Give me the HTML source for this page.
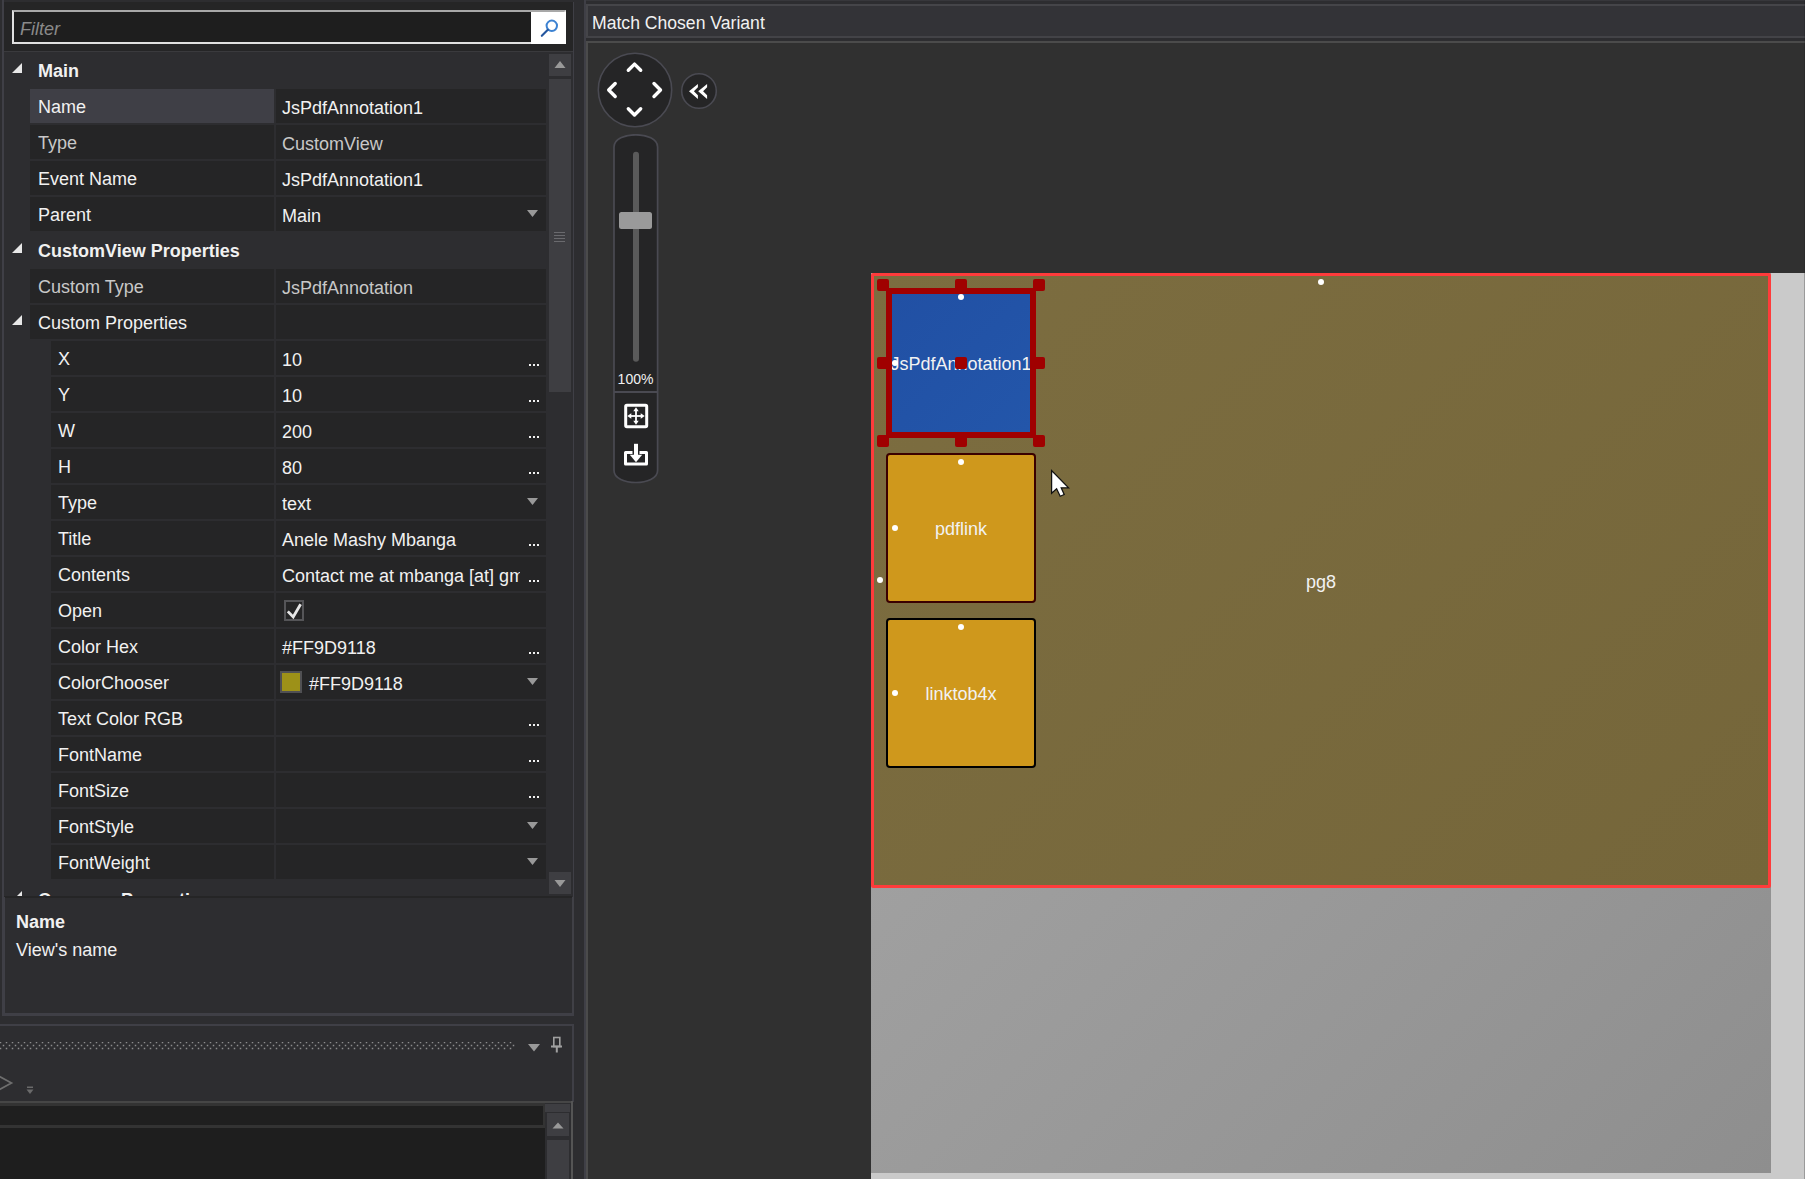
<!DOCTYPE html>
<html><head><meta charset="utf-8">
<style>
html,body{margin:0;padding:0;}
body{width:1805px;height:1179px;overflow:hidden;position:relative;background:#2d2d30;font-family:"Liberation Sans",sans-serif;color:#f1f1f1;}
div{position:absolute;box-sizing:border-box;}
svg{position:absolute;}
.t{white-space:nowrap;font-size:18px;line-height:20px;}
</style></head><body>

<div style="left:2px;top:0px;width:2px;height:897px;background:#3f3f46;"></div>
<div style="left:573px;top:2px;width:1px;height:895px;background:#3f3f46;"></div>
<div style="left:584px;top:0px;width:2px;height:1179px;background:#3f3f46;"></div>
<div style="left:4px;top:2px;width:569px;height:49px;background:#252526;"></div>
<div style="left:4px;top:51px;width:569px;height:1px;background:#3a3a3d;"></div>
<div style="left:12px;top:10px;width:554px;height:34px;background:#1e1e1e;border:2px solid #e0e0e0;border-top-color:#a8a8a8;"></div>
<div class="t" style="left:20px;top:19px;font-style:italic;color:#8a8a8a;">Filter</div>
<div style="left:531px;top:12px;width:35px;height:32px;background:#ffffff;"><svg width="35" height="32" style="left:0;top:0"><circle cx="20.8" cy="13.8" r="5.2" fill="none" stroke="#3c82d2" stroke-width="2"/><line x1="16.8" y1="17.8" x2="10.8" y2="23.8" stroke="#24569e" stroke-width="2.1" stroke-linecap="round"/></svg></div>
<div style="left:4px;top:52px;width:569px;height:844px;overflow:hidden;background:#2d2d30;"><div style="left:-4px;top:-52px;width:573px;height:1000px;">
<svg style="left:12px;top:63px" width="11" height="11"><polygon points="10,0 10,10 0,10" fill="#e8e8e8"/></svg>
<div class="t" style="left:38px;top:61px;font-weight:bold;">Main</div>
<div style="left:30px;top:89px;width:244px;height:34px;background:#3f3f46;"></div>
<div style="left:276px;top:89px;width:270px;height:34px;background:#252526;"></div>
<div class="t" style="left:38px;top:97px;color:#f1f1f1;">Name</div>
<div class="t" style="left:282px;top:98px;color:#f1f1f1;">JsPdfAnnotation1</div>
<div style="left:30px;top:125px;width:244px;height:34px;background:#252526;"></div>
<div style="left:276px;top:125px;width:270px;height:34px;background:#252526;"></div>
<div class="t" style="left:38px;top:133px;color:#c8c8c8;">Type</div>
<div class="t" style="left:282px;top:134px;color:#c8c8c8;">CustomView</div>
<div style="left:30px;top:161px;width:244px;height:34px;background:#252526;"></div>
<div style="left:276px;top:161px;width:270px;height:34px;background:#252526;"></div>
<div class="t" style="left:38px;top:169px;color:#f1f1f1;">Event Name</div>
<div class="t" style="left:282px;top:170px;color:#f1f1f1;">JsPdfAnnotation1</div>
<div style="left:30px;top:197px;width:244px;height:34px;background:#252526;"></div>
<div style="left:276px;top:197px;width:270px;height:34px;background:#252526;"></div>
<div class="t" style="left:38px;top:205px;color:#f1f1f1;">Parent</div>
<div class="t" style="left:282px;top:206px;color:#f1f1f1;">Main</div>
<svg style="left:527px;top:210px" width="12" height="8"><polygon points="0,0 11,0 5.5,7" fill="#999999"/></svg>
<svg style="left:12px;top:243px" width="11" height="11"><polygon points="10,0 10,10 0,10" fill="#e8e8e8"/></svg>
<div class="t" style="left:38px;top:241px;font-weight:bold;">CustomView Properties</div>
<div style="left:30px;top:269px;width:244px;height:34px;background:#252526;"></div>
<div style="left:276px;top:269px;width:270px;height:34px;background:#252526;"></div>
<div class="t" style="left:38px;top:277px;color:#c8c8c8;">Custom Type</div>
<div class="t" style="left:282px;top:278px;color:#c8c8c8;">JsPdfAnnotation</div>
<div style="left:30px;top:305px;width:244px;height:34px;background:#252526;"></div>
<div style="left:276px;top:305px;width:270px;height:34px;background:#252526;"></div>
<svg style="left:12px;top:315px" width="11" height="11"><polygon points="10,0 10,10 0,10" fill="#e8e8e8"/></svg>
<div class="t" style="left:38px;top:313px;">Custom Properties</div>
<div style="left:51px;top:341px;width:223px;height:34px;background:#252526;"></div>
<div style="left:276px;top:341px;width:270px;height:34px;background:#252526;"></div>
<div class="t" style="left:58px;top:349px;color:#f1f1f1;">X</div>
<div class="t" style="left:282px;top:350px;color:#f1f1f1;">10</div>
<div style="left:529px;top:364px;width:2px;height:2px;background:#f1f1f1;"></div>
<div style="left:533px;top:364px;width:2px;height:2px;background:#f1f1f1;"></div>
<div style="left:537px;top:364px;width:2px;height:2px;background:#f1f1f1;"></div>
<div style="left:51px;top:377px;width:223px;height:34px;background:#252526;"></div>
<div style="left:276px;top:377px;width:270px;height:34px;background:#252526;"></div>
<div class="t" style="left:58px;top:385px;color:#f1f1f1;">Y</div>
<div class="t" style="left:282px;top:386px;color:#f1f1f1;">10</div>
<div style="left:529px;top:400px;width:2px;height:2px;background:#f1f1f1;"></div>
<div style="left:533px;top:400px;width:2px;height:2px;background:#f1f1f1;"></div>
<div style="left:537px;top:400px;width:2px;height:2px;background:#f1f1f1;"></div>
<div style="left:51px;top:413px;width:223px;height:34px;background:#252526;"></div>
<div style="left:276px;top:413px;width:270px;height:34px;background:#252526;"></div>
<div class="t" style="left:58px;top:421px;color:#f1f1f1;">W</div>
<div class="t" style="left:282px;top:422px;color:#f1f1f1;">200</div>
<div style="left:529px;top:436px;width:2px;height:2px;background:#f1f1f1;"></div>
<div style="left:533px;top:436px;width:2px;height:2px;background:#f1f1f1;"></div>
<div style="left:537px;top:436px;width:2px;height:2px;background:#f1f1f1;"></div>
<div style="left:51px;top:449px;width:223px;height:34px;background:#252526;"></div>
<div style="left:276px;top:449px;width:270px;height:34px;background:#252526;"></div>
<div class="t" style="left:58px;top:457px;color:#f1f1f1;">H</div>
<div class="t" style="left:282px;top:458px;color:#f1f1f1;">80</div>
<div style="left:529px;top:472px;width:2px;height:2px;background:#f1f1f1;"></div>
<div style="left:533px;top:472px;width:2px;height:2px;background:#f1f1f1;"></div>
<div style="left:537px;top:472px;width:2px;height:2px;background:#f1f1f1;"></div>
<div style="left:51px;top:485px;width:223px;height:34px;background:#252526;"></div>
<div style="left:276px;top:485px;width:270px;height:34px;background:#252526;"></div>
<div class="t" style="left:58px;top:493px;color:#f1f1f1;">Type</div>
<div class="t" style="left:282px;top:494px;color:#f1f1f1;">text</div>
<svg style="left:527px;top:498px" width="12" height="8"><polygon points="0,0 11,0 5.5,7" fill="#999999"/></svg>
<div style="left:51px;top:521px;width:223px;height:34px;background:#252526;"></div>
<div style="left:276px;top:521px;width:270px;height:34px;background:#252526;"></div>
<div class="t" style="left:58px;top:529px;color:#f1f1f1;">Title</div>
<div class="t" style="left:282px;top:530px;color:#f1f1f1;">Anele Mashy Mbanga</div>
<div style="left:529px;top:544px;width:2px;height:2px;background:#f1f1f1;"></div>
<div style="left:533px;top:544px;width:2px;height:2px;background:#f1f1f1;"></div>
<div style="left:537px;top:544px;width:2px;height:2px;background:#f1f1f1;"></div>
<div style="left:51px;top:557px;width:223px;height:34px;background:#252526;"></div>
<div style="left:276px;top:557px;width:270px;height:34px;background:#252526;"></div>
<div class="t" style="left:58px;top:565px;color:#f1f1f1;">Contents</div>
<div class="t" style="left:282px;top:566px;width:238px;overflow:hidden;color:#f1f1f1;">Contact me at mbanga [at] gmail.com</div>
<div style="left:529px;top:580px;width:2px;height:2px;background:#f1f1f1;"></div>
<div style="left:533px;top:580px;width:2px;height:2px;background:#f1f1f1;"></div>
<div style="left:537px;top:580px;width:2px;height:2px;background:#f1f1f1;"></div>
<div style="left:51px;top:593px;width:223px;height:34px;background:#252526;"></div>
<div style="left:276px;top:593px;width:270px;height:34px;background:#252526;"></div>
<div class="t" style="left:58px;top:601px;color:#f1f1f1;">Open</div>
<div style="left:284px;top:600px;width:20px;height:21px;border:2px solid #555558;background:#252526;"><svg width="22" height="22" style="left:-2px;top:-2px"><polyline points="3.8,11.4 9.2,17 16.6,4.2" fill="none" stroke="#e6e6e6" stroke-width="2.8"/></svg></div>
<div style="left:51px;top:629px;width:223px;height:34px;background:#252526;"></div>
<div style="left:276px;top:629px;width:270px;height:34px;background:#252526;"></div>
<div class="t" style="left:58px;top:637px;color:#f1f1f1;">Color Hex</div>
<div class="t" style="left:282px;top:638px;color:#f1f1f1;">#FF9D9118</div>
<div style="left:529px;top:652px;width:2px;height:2px;background:#f1f1f1;"></div>
<div style="left:533px;top:652px;width:2px;height:2px;background:#f1f1f1;"></div>
<div style="left:537px;top:652px;width:2px;height:2px;background:#f1f1f1;"></div>
<div style="left:51px;top:665px;width:223px;height:34px;background:#252526;"></div>
<div style="left:276px;top:665px;width:270px;height:34px;background:#252526;"></div>
<div class="t" style="left:58px;top:673px;color:#f1f1f1;">ColorChooser</div>
<div style="left:280px;top:671px;width:22px;height:22px;border:2px solid #505053;background:#9d9118;"></div>
<div class="t" style="left:309px;top:674px;color:#f1f1f1;">#FF9D9118</div>
<svg style="left:527px;top:678px" width="12" height="8"><polygon points="0,0 11,0 5.5,7" fill="#999999"/></svg>
<div style="left:51px;top:701px;width:223px;height:34px;background:#252526;"></div>
<div style="left:276px;top:701px;width:270px;height:34px;background:#252526;"></div>
<div class="t" style="left:58px;top:709px;color:#f1f1f1;">Text Color RGB</div>
<div class="t" style="left:282px;top:710px;color:#f1f1f1;"></div>
<div style="left:529px;top:724px;width:2px;height:2px;background:#f1f1f1;"></div>
<div style="left:533px;top:724px;width:2px;height:2px;background:#f1f1f1;"></div>
<div style="left:537px;top:724px;width:2px;height:2px;background:#f1f1f1;"></div>
<div style="left:51px;top:737px;width:223px;height:34px;background:#252526;"></div>
<div style="left:276px;top:737px;width:270px;height:34px;background:#252526;"></div>
<div class="t" style="left:58px;top:745px;color:#f1f1f1;">FontName</div>
<div class="t" style="left:282px;top:746px;color:#f1f1f1;"></div>
<div style="left:529px;top:760px;width:2px;height:2px;background:#f1f1f1;"></div>
<div style="left:533px;top:760px;width:2px;height:2px;background:#f1f1f1;"></div>
<div style="left:537px;top:760px;width:2px;height:2px;background:#f1f1f1;"></div>
<div style="left:51px;top:773px;width:223px;height:34px;background:#252526;"></div>
<div style="left:276px;top:773px;width:270px;height:34px;background:#252526;"></div>
<div class="t" style="left:58px;top:781px;color:#f1f1f1;">FontSize</div>
<div class="t" style="left:282px;top:782px;color:#f1f1f1;"></div>
<div style="left:529px;top:796px;width:2px;height:2px;background:#f1f1f1;"></div>
<div style="left:533px;top:796px;width:2px;height:2px;background:#f1f1f1;"></div>
<div style="left:537px;top:796px;width:2px;height:2px;background:#f1f1f1;"></div>
<div style="left:51px;top:809px;width:223px;height:34px;background:#252526;"></div>
<div style="left:276px;top:809px;width:270px;height:34px;background:#252526;"></div>
<div class="t" style="left:58px;top:817px;color:#f1f1f1;">FontStyle</div>
<div class="t" style="left:282px;top:818px;color:#f1f1f1;"></div>
<svg style="left:527px;top:822px" width="12" height="8"><polygon points="0,0 11,0 5.5,7" fill="#999999"/></svg>
<div style="left:51px;top:845px;width:223px;height:34px;background:#252526;"></div>
<div style="left:276px;top:845px;width:270px;height:34px;background:#252526;"></div>
<div class="t" style="left:58px;top:853px;color:#f1f1f1;">FontWeight</div>
<div class="t" style="left:282px;top:854px;color:#f1f1f1;"></div>
<svg style="left:527px;top:858px" width="12" height="8"><polygon points="0,0 11,0 5.5,7" fill="#999999"/></svg>
<svg style="left:12px;top:891px" width="11" height="11"><polygon points="10,0 10,10 0,10" fill="#e8e8e8"/></svg>
<div class="t" style="left:38px;top:890px;font-weight:bold;">Common Properties</div>
</div></div>
<div style="left:549px;top:54px;width:22px;height:22px;background:#3e3e42;"><svg width="22" height="22" style="left:0;top:0"><polygon points="5.5,14 16.5,14 11,7" fill="#999999"/></svg></div>
<div style="left:549px;top:79px;width:22px;height:313px;background:#3e3e42;"></div>
<div style="left:554px;top:232px;width:11px;height:1px;background:#6a6a6e;"></div>
<div style="left:554px;top:235px;width:11px;height:1px;background:#6a6a6e;"></div>
<div style="left:554px;top:238px;width:11px;height:1px;background:#6a6a6e;"></div>
<div style="left:554px;top:241px;width:11px;height:1px;background:#6a6a6e;"></div>
<div style="left:549px;top:872px;width:22px;height:22px;background:#3e3e42;"><svg width="22" height="22" style="left:0;top:0"><polygon points="5.5,8 16.5,8 11,15" fill="#999999"/></svg></div>
<div style="left:4px;top:896px;width:568px;height:2px;background:#252526;"></div>
<div style="left:2px;top:897px;width:3px;height:119px;background:#3f3f46;"></div>
<div style="left:572px;top:897px;width:2px;height:119px;background:#404046;"></div>
<div class="t" style="left:16px;top:912px;font-weight:bold;">Name</div>
<div class="t" style="left:16px;top:940px;">View's name</div>
<div style="left:2px;top:1013px;width:572px;height:3px;background:#3f3f46;"></div>
<div style="left:0px;top:1024px;width:574px;height:2px;background:#3f3f46;"></div>
<div style="left:572px;top:1024px;width:2px;height:78px;background:#3f3f46;"></div>
<svg style="left:0;top:1042px" width="520" height="8"><g fill="#8c8c8c"><rect x="-0.25" y="-0.25" width="1.5" height="1.5"/><rect x="5.75" y="-0.25" width="1.5" height="1.5"/><rect x="11.75" y="-0.25" width="1.5" height="1.5"/><rect x="17.75" y="-0.25" width="1.5" height="1.5"/><rect x="23.75" y="-0.25" width="1.5" height="1.5"/><rect x="29.75" y="-0.25" width="1.5" height="1.5"/><rect x="35.75" y="-0.25" width="1.5" height="1.5"/><rect x="41.75" y="-0.25" width="1.5" height="1.5"/><rect x="47.75" y="-0.25" width="1.5" height="1.5"/><rect x="53.75" y="-0.25" width="1.5" height="1.5"/><rect x="59.75" y="-0.25" width="1.5" height="1.5"/><rect x="65.75" y="-0.25" width="1.5" height="1.5"/><rect x="71.75" y="-0.25" width="1.5" height="1.5"/><rect x="77.75" y="-0.25" width="1.5" height="1.5"/><rect x="83.75" y="-0.25" width="1.5" height="1.5"/><rect x="89.75" y="-0.25" width="1.5" height="1.5"/><rect x="95.75" y="-0.25" width="1.5" height="1.5"/><rect x="101.75" y="-0.25" width="1.5" height="1.5"/><rect x="107.75" y="-0.25" width="1.5" height="1.5"/><rect x="113.75" y="-0.25" width="1.5" height="1.5"/><rect x="119.75" y="-0.25" width="1.5" height="1.5"/><rect x="125.75" y="-0.25" width="1.5" height="1.5"/><rect x="131.75" y="-0.25" width="1.5" height="1.5"/><rect x="137.75" y="-0.25" width="1.5" height="1.5"/><rect x="143.75" y="-0.25" width="1.5" height="1.5"/><rect x="149.75" y="-0.25" width="1.5" height="1.5"/><rect x="155.75" y="-0.25" width="1.5" height="1.5"/><rect x="161.75" y="-0.25" width="1.5" height="1.5"/><rect x="167.75" y="-0.25" width="1.5" height="1.5"/><rect x="173.75" y="-0.25" width="1.5" height="1.5"/><rect x="179.75" y="-0.25" width="1.5" height="1.5"/><rect x="185.75" y="-0.25" width="1.5" height="1.5"/><rect x="191.75" y="-0.25" width="1.5" height="1.5"/><rect x="197.75" y="-0.25" width="1.5" height="1.5"/><rect x="203.75" y="-0.25" width="1.5" height="1.5"/><rect x="209.75" y="-0.25" width="1.5" height="1.5"/><rect x="215.75" y="-0.25" width="1.5" height="1.5"/><rect x="221.75" y="-0.25" width="1.5" height="1.5"/><rect x="227.75" y="-0.25" width="1.5" height="1.5"/><rect x="233.75" y="-0.25" width="1.5" height="1.5"/><rect x="239.75" y="-0.25" width="1.5" height="1.5"/><rect x="245.75" y="-0.25" width="1.5" height="1.5"/><rect x="251.75" y="-0.25" width="1.5" height="1.5"/><rect x="257.75" y="-0.25" width="1.5" height="1.5"/><rect x="263.75" y="-0.25" width="1.5" height="1.5"/><rect x="269.75" y="-0.25" width="1.5" height="1.5"/><rect x="275.75" y="-0.25" width="1.5" height="1.5"/><rect x="281.75" y="-0.25" width="1.5" height="1.5"/><rect x="287.75" y="-0.25" width="1.5" height="1.5"/><rect x="293.75" y="-0.25" width="1.5" height="1.5"/><rect x="299.75" y="-0.25" width="1.5" height="1.5"/><rect x="305.75" y="-0.25" width="1.5" height="1.5"/><rect x="311.75" y="-0.25" width="1.5" height="1.5"/><rect x="317.75" y="-0.25" width="1.5" height="1.5"/><rect x="323.75" y="-0.25" width="1.5" height="1.5"/><rect x="329.75" y="-0.25" width="1.5" height="1.5"/><rect x="335.75" y="-0.25" width="1.5" height="1.5"/><rect x="341.75" y="-0.25" width="1.5" height="1.5"/><rect x="347.75" y="-0.25" width="1.5" height="1.5"/><rect x="353.75" y="-0.25" width="1.5" height="1.5"/><rect x="359.75" y="-0.25" width="1.5" height="1.5"/><rect x="365.75" y="-0.25" width="1.5" height="1.5"/><rect x="371.75" y="-0.25" width="1.5" height="1.5"/><rect x="377.75" y="-0.25" width="1.5" height="1.5"/><rect x="383.75" y="-0.25" width="1.5" height="1.5"/><rect x="389.75" y="-0.25" width="1.5" height="1.5"/><rect x="395.75" y="-0.25" width="1.5" height="1.5"/><rect x="401.75" y="-0.25" width="1.5" height="1.5"/><rect x="407.75" y="-0.25" width="1.5" height="1.5"/><rect x="413.75" y="-0.25" width="1.5" height="1.5"/><rect x="419.75" y="-0.25" width="1.5" height="1.5"/><rect x="425.75" y="-0.25" width="1.5" height="1.5"/><rect x="431.75" y="-0.25" width="1.5" height="1.5"/><rect x="437.75" y="-0.25" width="1.5" height="1.5"/><rect x="443.75" y="-0.25" width="1.5" height="1.5"/><rect x="449.75" y="-0.25" width="1.5" height="1.5"/><rect x="455.75" y="-0.25" width="1.5" height="1.5"/><rect x="461.75" y="-0.25" width="1.5" height="1.5"/><rect x="467.75" y="-0.25" width="1.5" height="1.5"/><rect x="473.75" y="-0.25" width="1.5" height="1.5"/><rect x="479.75" y="-0.25" width="1.5" height="1.5"/><rect x="485.75" y="-0.25" width="1.5" height="1.5"/><rect x="491.75" y="-0.25" width="1.5" height="1.5"/><rect x="497.75" y="-0.25" width="1.5" height="1.5"/><rect x="503.75" y="-0.25" width="1.5" height="1.5"/><rect x="509.75" y="-0.25" width="1.5" height="1.5"/><rect x="2.75" y="2.75" width="1.5" height="1.5"/><rect x="8.75" y="2.75" width="1.5" height="1.5"/><rect x="14.75" y="2.75" width="1.5" height="1.5"/><rect x="20.75" y="2.75" width="1.5" height="1.5"/><rect x="26.75" y="2.75" width="1.5" height="1.5"/><rect x="32.75" y="2.75" width="1.5" height="1.5"/><rect x="38.75" y="2.75" width="1.5" height="1.5"/><rect x="44.75" y="2.75" width="1.5" height="1.5"/><rect x="50.75" y="2.75" width="1.5" height="1.5"/><rect x="56.75" y="2.75" width="1.5" height="1.5"/><rect x="62.75" y="2.75" width="1.5" height="1.5"/><rect x="68.75" y="2.75" width="1.5" height="1.5"/><rect x="74.75" y="2.75" width="1.5" height="1.5"/><rect x="80.75" y="2.75" width="1.5" height="1.5"/><rect x="86.75" y="2.75" width="1.5" height="1.5"/><rect x="92.75" y="2.75" width="1.5" height="1.5"/><rect x="98.75" y="2.75" width="1.5" height="1.5"/><rect x="104.75" y="2.75" width="1.5" height="1.5"/><rect x="110.75" y="2.75" width="1.5" height="1.5"/><rect x="116.75" y="2.75" width="1.5" height="1.5"/><rect x="122.75" y="2.75" width="1.5" height="1.5"/><rect x="128.75" y="2.75" width="1.5" height="1.5"/><rect x="134.75" y="2.75" width="1.5" height="1.5"/><rect x="140.75" y="2.75" width="1.5" height="1.5"/><rect x="146.75" y="2.75" width="1.5" height="1.5"/><rect x="152.75" y="2.75" width="1.5" height="1.5"/><rect x="158.75" y="2.75" width="1.5" height="1.5"/><rect x="164.75" y="2.75" width="1.5" height="1.5"/><rect x="170.75" y="2.75" width="1.5" height="1.5"/><rect x="176.75" y="2.75" width="1.5" height="1.5"/><rect x="182.75" y="2.75" width="1.5" height="1.5"/><rect x="188.75" y="2.75" width="1.5" height="1.5"/><rect x="194.75" y="2.75" width="1.5" height="1.5"/><rect x="200.75" y="2.75" width="1.5" height="1.5"/><rect x="206.75" y="2.75" width="1.5" height="1.5"/><rect x="212.75" y="2.75" width="1.5" height="1.5"/><rect x="218.75" y="2.75" width="1.5" height="1.5"/><rect x="224.75" y="2.75" width="1.5" height="1.5"/><rect x="230.75" y="2.75" width="1.5" height="1.5"/><rect x="236.75" y="2.75" width="1.5" height="1.5"/><rect x="242.75" y="2.75" width="1.5" height="1.5"/><rect x="248.75" y="2.75" width="1.5" height="1.5"/><rect x="254.75" y="2.75" width="1.5" height="1.5"/><rect x="260.75" y="2.75" width="1.5" height="1.5"/><rect x="266.75" y="2.75" width="1.5" height="1.5"/><rect x="272.75" y="2.75" width="1.5" height="1.5"/><rect x="278.75" y="2.75" width="1.5" height="1.5"/><rect x="284.75" y="2.75" width="1.5" height="1.5"/><rect x="290.75" y="2.75" width="1.5" height="1.5"/><rect x="296.75" y="2.75" width="1.5" height="1.5"/><rect x="302.75" y="2.75" width="1.5" height="1.5"/><rect x="308.75" y="2.75" width="1.5" height="1.5"/><rect x="314.75" y="2.75" width="1.5" height="1.5"/><rect x="320.75" y="2.75" width="1.5" height="1.5"/><rect x="326.75" y="2.75" width="1.5" height="1.5"/><rect x="332.75" y="2.75" width="1.5" height="1.5"/><rect x="338.75" y="2.75" width="1.5" height="1.5"/><rect x="344.75" y="2.75" width="1.5" height="1.5"/><rect x="350.75" y="2.75" width="1.5" height="1.5"/><rect x="356.75" y="2.75" width="1.5" height="1.5"/><rect x="362.75" y="2.75" width="1.5" height="1.5"/><rect x="368.75" y="2.75" width="1.5" height="1.5"/><rect x="374.75" y="2.75" width="1.5" height="1.5"/><rect x="380.75" y="2.75" width="1.5" height="1.5"/><rect x="386.75" y="2.75" width="1.5" height="1.5"/><rect x="392.75" y="2.75" width="1.5" height="1.5"/><rect x="398.75" y="2.75" width="1.5" height="1.5"/><rect x="404.75" y="2.75" width="1.5" height="1.5"/><rect x="410.75" y="2.75" width="1.5" height="1.5"/><rect x="416.75" y="2.75" width="1.5" height="1.5"/><rect x="422.75" y="2.75" width="1.5" height="1.5"/><rect x="428.75" y="2.75" width="1.5" height="1.5"/><rect x="434.75" y="2.75" width="1.5" height="1.5"/><rect x="440.75" y="2.75" width="1.5" height="1.5"/><rect x="446.75" y="2.75" width="1.5" height="1.5"/><rect x="452.75" y="2.75" width="1.5" height="1.5"/><rect x="458.75" y="2.75" width="1.5" height="1.5"/><rect x="464.75" y="2.75" width="1.5" height="1.5"/><rect x="470.75" y="2.75" width="1.5" height="1.5"/><rect x="476.75" y="2.75" width="1.5" height="1.5"/><rect x="482.75" y="2.75" width="1.5" height="1.5"/><rect x="488.75" y="2.75" width="1.5" height="1.5"/><rect x="494.75" y="2.75" width="1.5" height="1.5"/><rect x="500.75" y="2.75" width="1.5" height="1.5"/><rect x="506.75" y="2.75" width="1.5" height="1.5"/><rect x="512.75" y="2.75" width="1.5" height="1.5"/><rect x="-0.25" y="5.75" width="1.5" height="1.5"/><rect x="5.75" y="5.75" width="1.5" height="1.5"/><rect x="11.75" y="5.75" width="1.5" height="1.5"/><rect x="17.75" y="5.75" width="1.5" height="1.5"/><rect x="23.75" y="5.75" width="1.5" height="1.5"/><rect x="29.75" y="5.75" width="1.5" height="1.5"/><rect x="35.75" y="5.75" width="1.5" height="1.5"/><rect x="41.75" y="5.75" width="1.5" height="1.5"/><rect x="47.75" y="5.75" width="1.5" height="1.5"/><rect x="53.75" y="5.75" width="1.5" height="1.5"/><rect x="59.75" y="5.75" width="1.5" height="1.5"/><rect x="65.75" y="5.75" width="1.5" height="1.5"/><rect x="71.75" y="5.75" width="1.5" height="1.5"/><rect x="77.75" y="5.75" width="1.5" height="1.5"/><rect x="83.75" y="5.75" width="1.5" height="1.5"/><rect x="89.75" y="5.75" width="1.5" height="1.5"/><rect x="95.75" y="5.75" width="1.5" height="1.5"/><rect x="101.75" y="5.75" width="1.5" height="1.5"/><rect x="107.75" y="5.75" width="1.5" height="1.5"/><rect x="113.75" y="5.75" width="1.5" height="1.5"/><rect x="119.75" y="5.75" width="1.5" height="1.5"/><rect x="125.75" y="5.75" width="1.5" height="1.5"/><rect x="131.75" y="5.75" width="1.5" height="1.5"/><rect x="137.75" y="5.75" width="1.5" height="1.5"/><rect x="143.75" y="5.75" width="1.5" height="1.5"/><rect x="149.75" y="5.75" width="1.5" height="1.5"/><rect x="155.75" y="5.75" width="1.5" height="1.5"/><rect x="161.75" y="5.75" width="1.5" height="1.5"/><rect x="167.75" y="5.75" width="1.5" height="1.5"/><rect x="173.75" y="5.75" width="1.5" height="1.5"/><rect x="179.75" y="5.75" width="1.5" height="1.5"/><rect x="185.75" y="5.75" width="1.5" height="1.5"/><rect x="191.75" y="5.75" width="1.5" height="1.5"/><rect x="197.75" y="5.75" width="1.5" height="1.5"/><rect x="203.75" y="5.75" width="1.5" height="1.5"/><rect x="209.75" y="5.75" width="1.5" height="1.5"/><rect x="215.75" y="5.75" width="1.5" height="1.5"/><rect x="221.75" y="5.75" width="1.5" height="1.5"/><rect x="227.75" y="5.75" width="1.5" height="1.5"/><rect x="233.75" y="5.75" width="1.5" height="1.5"/><rect x="239.75" y="5.75" width="1.5" height="1.5"/><rect x="245.75" y="5.75" width="1.5" height="1.5"/><rect x="251.75" y="5.75" width="1.5" height="1.5"/><rect x="257.75" y="5.75" width="1.5" height="1.5"/><rect x="263.75" y="5.75" width="1.5" height="1.5"/><rect x="269.75" y="5.75" width="1.5" height="1.5"/><rect x="275.75" y="5.75" width="1.5" height="1.5"/><rect x="281.75" y="5.75" width="1.5" height="1.5"/><rect x="287.75" y="5.75" width="1.5" height="1.5"/><rect x="293.75" y="5.75" width="1.5" height="1.5"/><rect x="299.75" y="5.75" width="1.5" height="1.5"/><rect x="305.75" y="5.75" width="1.5" height="1.5"/><rect x="311.75" y="5.75" width="1.5" height="1.5"/><rect x="317.75" y="5.75" width="1.5" height="1.5"/><rect x="323.75" y="5.75" width="1.5" height="1.5"/><rect x="329.75" y="5.75" width="1.5" height="1.5"/><rect x="335.75" y="5.75" width="1.5" height="1.5"/><rect x="341.75" y="5.75" width="1.5" height="1.5"/><rect x="347.75" y="5.75" width="1.5" height="1.5"/><rect x="353.75" y="5.75" width="1.5" height="1.5"/><rect x="359.75" y="5.75" width="1.5" height="1.5"/><rect x="365.75" y="5.75" width="1.5" height="1.5"/><rect x="371.75" y="5.75" width="1.5" height="1.5"/><rect x="377.75" y="5.75" width="1.5" height="1.5"/><rect x="383.75" y="5.75" width="1.5" height="1.5"/><rect x="389.75" y="5.75" width="1.5" height="1.5"/><rect x="395.75" y="5.75" width="1.5" height="1.5"/><rect x="401.75" y="5.75" width="1.5" height="1.5"/><rect x="407.75" y="5.75" width="1.5" height="1.5"/><rect x="413.75" y="5.75" width="1.5" height="1.5"/><rect x="419.75" y="5.75" width="1.5" height="1.5"/><rect x="425.75" y="5.75" width="1.5" height="1.5"/><rect x="431.75" y="5.75" width="1.5" height="1.5"/><rect x="437.75" y="5.75" width="1.5" height="1.5"/><rect x="443.75" y="5.75" width="1.5" height="1.5"/><rect x="449.75" y="5.75" width="1.5" height="1.5"/><rect x="455.75" y="5.75" width="1.5" height="1.5"/><rect x="461.75" y="5.75" width="1.5" height="1.5"/><rect x="467.75" y="5.75" width="1.5" height="1.5"/><rect x="473.75" y="5.75" width="1.5" height="1.5"/><rect x="479.75" y="5.75" width="1.5" height="1.5"/><rect x="485.75" y="5.75" width="1.5" height="1.5"/><rect x="491.75" y="5.75" width="1.5" height="1.5"/><rect x="497.75" y="5.75" width="1.5" height="1.5"/><rect x="503.75" y="5.75" width="1.5" height="1.5"/><rect x="509.75" y="5.75" width="1.5" height="1.5"/></g></svg>
<svg style="left:528px;top:1044px" width="13" height="9"><polygon points="0,0 12,0 6,7.5" fill="#999999"/></svg>
<svg style="left:551px;top:1036px" width="12" height="17"><g fill="none" stroke="#a0a0a0" stroke-width="1.6"><rect x="2.8" y="1.5" width="6" height="9"/></g><rect x="0" y="9.5" width="11" height="2" fill="#a0a0a0"/><rect x="4.8" y="11" width="2" height="5.5" fill="#a0a0a0"/></svg>
<svg style="left:-6px;top:1073px" width="20" height="20"><polygon points="2,1.5 17.5,10 2,18.5" fill="none" stroke="#6e6e6e" stroke-width="1.7"/></svg>
<svg style="left:26px;top:1086px" width="9" height="10"><rect x="1" y="0.5" width="6" height="1.5" fill="#6a6a6a"/><polygon points="0.5,3.5 7.5,3.5 4,8" fill="#6a6a6a"/></svg>
<div style="left:0px;top:1101px;width:572px;height:2px;background:#464646;"></div>
<div style="left:0px;top:1103px;width:572px;height:76px;background:#333333;"></div>
<div style="left:0px;top:1106px;width:543px;height:19px;background:#1f1f1f;"></div>
<div style="left:0px;top:1128px;width:545px;height:51px;background:#1e1e1e;"></div>
<div style="left:545px;top:1103px;width:29px;height:76px;background:#2d2d30;"></div>
<div style="left:545px;top:1104px;width:25px;height:8px;background:#3e3e42;"></div>
<div style="left:547px;top:1113px;width:22px;height:23px;background:#3e3e42;"><svg width="22" height="23" style="left:0;top:0"><polygon points="5.5,15.5 16.5,15.5 11,9.5" fill="#999999"/></svg></div>
<div style="left:547px;top:1140px;width:22px;height:39px;background:#3e3e42;"></div>
<div style="left:571px;top:1101px;width:2px;height:78px;background:#555555;"></div>
<div style="left:586px;top:0px;width:1219px;height:4px;background:#2d2d30;"></div>
<div style="left:586px;top:0px;width:1219px;height:1px;background:#37373b;"></div>
<div style="left:586px;top:4px;width:1219px;height:34px;background:#333337;border-top:2px solid #454549;border-left:2px solid #454549;border-bottom:2px solid #434347;"></div>
<div class="t" style="left:592px;top:13px;color:#f1f1f1;font-size:17.6px;">Match Chosen Variant</div>
<div style="left:586px;top:38px;width:1219px;height:3px;background:#2d2d30;"></div>
<div style="left:586px;top:41px;width:1219px;height:1138px;background:#303030;border-top:2px solid #4b4b4b;border-left:2px solid #4b4b4b;"></div>
<div style="left:1804px;top:0px;width:1px;height:273px;background:rgba(0,0,0,0.12);"></div>
<svg style="left:597px;top:52px" width="76" height="76"><circle cx="38" cy="38" r="36.7" fill="#252526" stroke="#4a4a52" stroke-width="1.6"/><g fill="none" stroke="#ffffff" stroke-width="3.4" stroke-linecap="round" stroke-linejoin="round"><polyline points="31.3,18.3 37.5,12.1 43.7,18.3"/><polyline points="31.3,56.8 37.5,63 43.7,56.8"/><polyline points="18.2,31.5 11.7,38 18.2,44.5"/><polyline points="57,31.5 63.5,38 57,44.5"/></g></svg>
<svg style="left:680px;top:72px" width="38" height="38"><circle cx="19" cy="19" r="17.3" fill="#252526" stroke="#4a4a52" stroke-width="1.6"/><polygon points="9,19.3 17.9,11.9 17.9,15.3 13.9,19.3 17.9,23.3 17.9,26.9" fill="#ffffff"/><polygon points="18.2,19.3 27.1,11.9 27.1,15.3 23.1,19.3 27.1,23.3 27.1,26.9" fill="#ffffff"/></svg>
<svg style="left:612px;top:134px" width="47" height="352"><path d="M2,13 C2,-3.3 45.6,-3.3 45.6,13 L45.6,336.5 C45.6,352.5 2,352.5 2,336.5 Z" fill="#252526" stroke="#4a4a52" stroke-width="1.7"/><rect x="21" y="17.8" width="6" height="210" rx="3" fill="#5a5a5a"/><rect x="7" y="78" width="33" height="17" rx="2.5" fill="#9a9a9a"/><line x1="2" y1="258" x2="45.6" y2="258" stroke="#4a4a52" stroke-width="1.8"/></svg>
<div class="t" style="left:612px;top:371px;width:47px;text-align:center;font-size:14px;line-height:16px;color:#f1f1f1;">100%</div>
<svg style="left:623px;top:403px" width="26" height="26"><rect x="2.7" y="2.3" width="21" height="21.4" rx="1.2" fill="none" stroke="#ffffff" stroke-width="3"/><g stroke="#ffffff" stroke-width="1.8" fill="none"><line x1="13" y1="6.5" x2="13" y2="19.5"/><line x1="6.5" y1="13" x2="19.5" y2="13"/></g><g fill="#ffffff"><polygon points="13,4.3 10.3,8.3 15.7,8.3"/><polygon points="13,21.7 10.3,17.7 15.7,17.7"/><polygon points="4.3,13 8.3,10.3 8.3,15.7"/><polygon points="21.7,13 17.7,10.3 17.7,15.7"/></g></svg>
<svg style="left:623px;top:442px" width="26" height="26"><path d="M9.5,10.5 L2.5,10.5 L2.5,22 L23.5,22 L23.5,10.5 L16.5,10.5" fill="none" stroke="#ffffff" stroke-width="3" stroke-linejoin="round"/><rect x="11" y="1.8" width="4" height="12" fill="#ffffff"/><polygon points="6.8,12.7 19.2,12.7 13,20.3" fill="#ffffff"/></svg>
<div style="left:871px;top:273px;width:934px;height:906px;background:#cacaca;"></div>
<div style="left:1804px;top:273px;width:1px;height:906px;background:#9a9a9a;"></div>
<div style="left:871px;top:273px;width:900px;height:900px;background:linear-gradient(to bottom right,#a9a9a9 0%,#8e8e8e 100%);"></div>
<div style="left:871px;top:273px;width:900px;height:615px;background:linear-gradient(135deg,#7c6d40 0%,#75663a 100%);border:3px solid #ff3b3b;border-radius:2px;"></div>
<div class="t" style="left:1301px;top:572px;width:40px;text-align:center;color:#f2f2f2;">pg8</div>
<div style="left:1318px;top:279px;width:6px;height:6px;border-radius:50%;background:#ffffff;"></div>
<div style="left:877px;top:577px;width:6px;height:6px;border-radius:50%;background:#ffffff;"></div>
<div style="left:886px;top:288px;width:150px;height:150px;background:linear-gradient(to bottom right,#2150a4 0%,#2356aa 100%);border:6px solid #a00000;overflow:hidden;"><div class="t" style="left:-20px;top:60px;width:178px;text-align:center;color:#f2f2f2;">JsPdfAnnotation1</div></div>
<div style="left:958px;top:294px;width:6px;height:6px;border-radius:50%;background:#ffffff;"></div>
<div style="left:892px;top:360px;width:6px;height:6px;border-radius:50%;background:#ffffff;"></div>
<div style="left:877px;top:279px;width:12px;height:12px;background:#a00000;border-radius:2px;"></div>
<div style="left:955px;top:279px;width:12px;height:12px;background:#a00000;border-radius:2px;"></div>
<div style="left:1033px;top:279px;width:12px;height:12px;background:#a00000;border-radius:2px;"></div>
<div style="left:877px;top:357px;width:12px;height:12px;background:#a00000;border-radius:2px;"></div>
<div style="left:955px;top:357px;width:12px;height:12px;background:#a00000;border-radius:2px;"></div>
<div style="left:1033px;top:357px;width:12px;height:12px;background:#a00000;border-radius:2px;"></div>
<div style="left:877px;top:435px;width:12px;height:12px;background:#a00000;border-radius:2px;"></div>
<div style="left:955px;top:435px;width:12px;height:12px;background:#a00000;border-radius:2px;"></div>
<div style="left:1033px;top:435px;width:12px;height:12px;background:#a00000;border-radius:2px;"></div>
<div style="left:886px;top:453px;width:150px;height:150px;background:#cf981c;border:2px solid #3a0000;border-radius:4px;"></div>
<div class="t" style="left:886px;top:519px;width:150px;text-align:center;color:#f2f2f2;">pdflink</div>
<div style="left:958px;top:459px;width:6px;height:6px;border-radius:50%;background:#ffffff;"></div>
<div style="left:892px;top:525px;width:6px;height:6px;border-radius:50%;background:#ffffff;"></div>
<div style="left:886px;top:618px;width:150px;height:150px;background:#cf981c;border:2px solid #000000;border-radius:4px;"></div>
<div class="t" style="left:886px;top:684px;width:150px;text-align:center;color:#f2f2f2;">linktob4x</div>
<div style="left:958px;top:624px;width:6px;height:6px;border-radius:50%;background:#ffffff;"></div>
<div style="left:892px;top:690px;width:6px;height:6px;border-radius:50%;background:#ffffff;"></div>
<svg style="left:1050px;top:469px" width="22" height="30"><path d="M1.6,1.6 L1.6,24.3 L6.6,19.8 L10.2,27.3 L14.2,25.5 L11.2,18.8 L18.6,18.8 Z" fill="#ffffff" stroke="#111111" stroke-width="1.25" stroke-linejoin="miter"/></svg>
</body></html>
